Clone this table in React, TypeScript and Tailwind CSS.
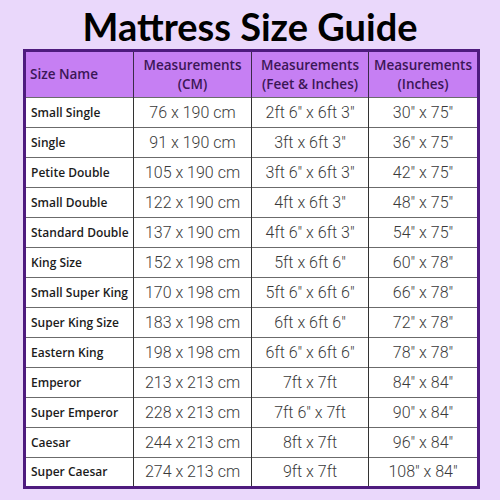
const rows = [
  ['Small Single', '76 x 190 cm', '2ft 6" x 6ft 3"', '30" x 75"'],
  ['Single', '91 x 190 cm', '3ft x 6ft 3"', '36" x 75"'],
  ['Petite Double', '105 x 190 cm', '3ft 6" x 6ft 3"', '42" x 75"'],
  ['Small Double', '122 x 190 cm', '4ft x 6ft 3"', '48" x 75"'],
  ['Standard Double', '137 x 190 cm', '4ft 6" x 6ft 3"', '54" x 75"'],
  ['King Size', '152 x 198 cm', '5ft x 6ft 6"', '60" x 78"'],
  ['Small Super King', '170 x 198 cm', '5ft 6" x 6ft 6"', '66" x 78"'],
  ['Super King Size', '183 x 198 cm', '6ft x 6ft 6"', '72" x 78"'],
  ['Eastern King', '198 x 198 cm', '6ft 6" x 6ft 6"', '78" x 78"'],
  ['Emperor', '213 x 213 cm', '7ft x 7ft', '84" x 84"'],
  ['Super Emperor', '228 x 213 cm', '7ft 6" x 7ft', '90" x 84"'],
  ['Caesar', '244 x 213 cm', '8ft x 7ft', '96" x 84"'],
  ['Super Caesar', '274 x 213 cm', '9ft x 7ft', '108" x 84"'],
];

export default function App() {
  return (
    <div className="w-[500px] h-[500px] bg-[#ead8fb] overflow-hidden">
      <h1 className="pt-[4px] h-[49px] text-center text-[38px] leading-[44px] font-bold text-black font-['Lato',sans-serif]">
        Mattress Size Guide
      </h1>

      <table className="ml-[23px] w-[454px] table-fixed border-collapse border-[3px] border-[#4e1b7e] bg-white">
        <colgroup>
          <col className="w-[109px]" />
          <col className="w-[118px]" />
          <col className="w-[117px]" />
          <col className="w-[110px]" />
        </colgroup>
        <thead>
          <tr className="h-[47px] bg-[#c67ff3] text-[#3b1656] text-[13.5px] leading-[19px] font-semibold font-['Open_Sans',sans-serif]">
            <th className="pl-[4px] text-left font-semibold border-r border-[#3a2a48]">Size Name</th>
            <th className="text-center font-semibold border-r border-[#3a2a48]">Measurements<br />(CM)</th>
            <th className="text-center font-semibold border-r border-[#3a2a48]">Measurements<br />(Feet &amp; Inches)</th>
            <th className="text-center font-semibold">Measurements<br />(Inches)</th>
          </tr>
        </thead>
        <tbody>
          {rows.map((r) => (
            <tr key={r[0]} className="h-[30px] border-t border-[#6b6b6b]">
              <td className="pl-[5px] text-left text-[12px] font-semibold text-[#1c1c1c] border-r border-[#333] font-['Open_Sans',sans-serif] whitespace-nowrap">
                {r[0]}
              </td>
              <td className="text-center text-[16px] text-[#3a3a3a] border-r border-[#333] font-['Roboto',sans-serif] font-light">
                {r[1]}
              </td>
              <td className="text-center text-[16px] text-[#3a3a3a] border-r border-[#333] font-['Roboto',sans-serif] font-light whitespace-nowrap">
                {r[2]}
              </td>
              <td className="text-center text-[16px] text-[#3a3a3a] font-['Roboto',sans-serif] font-light">
                {r[3]}
              </td>
            </tr>
          ))}
        </tbody>
      </table>
    </div>
  );
}
